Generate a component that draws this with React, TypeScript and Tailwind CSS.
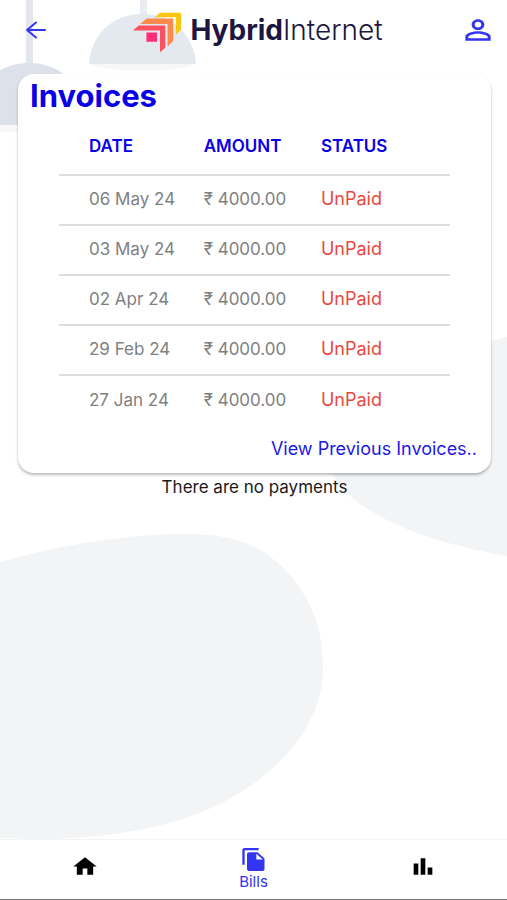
import type { ReactNode } from 'react';

type Invoice = {
  date: string;
  amount: string;
  status: string;
};

const invoices: Invoice[] = [
  { date: '06 May 24', amount: '₹ 4000.00', status: 'UnPaid' },
  { date: '03 May 24', amount: '₹ 4000.00', status: 'UnPaid' },
  { date: '02 Apr 24', amount: '₹ 4000.00', status: 'UnPaid' },
  { date: '29 Feb 24', amount: '₹ 4000.00', status: 'UnPaid' },
  { date: '27 Jan 24', amount: '₹ 4000.00', status: 'UnPaid' },
];

// Lamps at the top, soft blobs below
function Backdrop() {
  return (
    <svg
      className="absolute inset-0 -z-10 w-full h-full"
      viewBox="0 0 507 900"
      preserveAspectRatio="none"
      aria-hidden="true"
    >
      <path d="M-27 124a56 9 0 00112 0z" fill="#f8f8f7" />
      <path d="M26 0h7v64h-7z" fill="#e3e7ed" />
      <path d="M-27 125C-27 86-4 63 29 63s56 23 56 62z" fill="#dde2ea" />
      <path d="M89 63a54 9 0 00107 0z" fill="#f7f7f8" />
      <path d="M140 0h7v16h-7z" fill="#e9ecf1" />
      <path d="M89 64C91 35 112 14 142 14s52 21 54 50z" fill="#e4e8ef" />
      <path d="M507 337C440 352 350 400 326 455C332 500 400 538 507 556z" fill="#f2f4f6" />
      <path
        d="M0 562C60 545 125 534 185 534C235 534 262 545 288 573C312 600 323 630 323 668C323 710 300 745 266 774C215 817 140 838 40 839L0 838z"
        fill="#f2f4f6"
      />
    </svg>
  );
}

function Logo() {
  return (
    <div className="flex items-start gap-2 text-[#1c1640]">
      <svg className="w-[50px] h-[41px]" viewBox="400 34 150 124" aria-hidden="true">
        <path d="M468 50l16-14h64v52l-16 14V50z" fill="#fac710" />
        <path d="M424 70l20-16h80v68l-17 16V70z" fill="#fc8a4a" />
        <path d="M402 90l18-15h80v67l-16 14V90z" fill="#fb4f62" />
        <path d="M443 96h32v28h-32z" fill="#ff2d78" />
      </svg>
      <span className="text-[28px] leading-9 whitespace-nowrap">
        <span className="font-bold">Hybrid</span>
        <span className="font-light">Internet</span>
      </span>
    </div>
  );
}

function NavItem({ label, active = false, children }: { label: string; active?: boolean; children: ReactNode }) {
  return (
    <button
      type="button"
      aria-label={label}
      className={`flex-1 flex flex-col items-center justify-center ${active ? 'text-[#3434f5]' : 'pb-[6px] text-black'}`}
    >
      <svg className="w-7 h-[25px]" viewBox="0 0 24 24" preserveAspectRatio="none" fill="currentColor">
        {children}
      </svg>
      {active && <span className="text-[15px] leading-5">{label}</span>}
    </button>
  );
}

export default function App() {
  return (
    <div className="relative isolate min-h-screen flex flex-col bg-white font-[Inter,'Noto_Sans',sans-serif]">
      <Backdrop />

      <header className="flex items-start justify-between pt-3 pl-4 pr-[10px] h-[74px]">
        <button type="button" aria-label="Back" className="w-10 h-9 flex items-center justify-center text-[#3434f5]">
          <svg className="w-6 h-6" viewBox="0 0 24 24" fill="none" stroke="currentColor" strokeWidth={2} strokeLinecap="round" strokeLinejoin="round">
            <path d="M21 12H3M12 4.500L3 12l9 7.500" />
          </svg>
        </button>
        <Logo />
        <button type="button" aria-label="Profile" className="h-9 flex items-center text-[#3434f5]">
          <svg className="w-[38px] h-8" viewBox="0 0 24 24" preserveAspectRatio="none" fill="currentColor">
            <path d="M12 5.900c1.160 0 2.100.940 2.100 2.100s-.940 2.100-2.100 2.100S9.900 9.160 9.900 8s.940-2.100 2.100-2.100m0 9c2.970 0 6.100 1.460 6.100 2.100v1.100H5.900V17c0-.640 3.130-2.100 6.100-2.100M12 4C9.790 4 8 5.790 8 8s1.790 4 4 4 4-1.790 4-4-1.790-4-4-4zm0 9c-2.670 0-8 1.340-8 4v3h16v-3c0-2.660-5.330-4-8-4z" />
          </svg>
        </button>
      </header>

      <main className="flex-1 pl-[18px] pr-4">
        <section className="rounded-2xl bg-white shadow-[0_2px_3px_rgba(0,0,0,0.28)] pb-3">
          <h1 className="pl-3 pt-1 text-[31px] leading-9 font-bold text-[#0a00e6]">Invoices</h1>
          <div className="px-[41px]">
            <table className="w-full table-fixed text-left text-[17px]">
              <thead>
                <tr className="h-[61px] text-[#0a00e6]">
                  <th className="w-[37%] pl-[30px] pt-[6px] font-semibold">DATE</th>
                  <th className="w-[30%] pt-[6px] font-semibold">AMOUNT</th>
                  <th className="w-[33%] pt-[6px] font-semibold">STATUS</th>
                </tr>
              </thead>
              <tbody>
                {invoices.map((invoice) => (
                  <tr key={invoice.date} className="h-[50px] border-t-2 border-[#dededf] text-[#808080]">
                    <td className="pl-[30px]">{invoice.date}</td>
                    <td>{invoice.amount}</td>
                    <td className="pb-[3px] text-[18px] text-[#e8493f]">{invoice.status}</td>
                  </tr>
                ))}
              </tbody>
            </table>
          </div>
          <div className="flex justify-end pt-3 pr-[14px]">
            <a href="#previous" className="text-[18px] leading-6 text-[#1d18ea]">
              View Previous Invoices..
            </a>
          </div>
        </section>
        <p className="pt-[2px] text-center text-[17px] leading-6 text-[#1a1a1a]">There are no payments</p>
      </main>

      <nav className="flex h-[61px] bg-white border-t border-t-[#f3f3f3] border-b border-b-[#777777]">
        <NavItem label="Home">
          <path d="M10 20v-6h4v6h5v-8h3L12 3 2 12h3v8z" />
        </NavItem>
        <NavItem label="Bills" active>
          <path d="M16 1H4c-1.100 0-2 .900-2 2v14h2V3h12V1zm-1 4l6 6v10c0 1.100-.900 2-2 2H7.990C6.890 23 6 22.100 6 21l.010-14c0-1.100.890-2 1.990-2h7zm-1 7h5.500L14 6.500V12z" />
        </NavItem>
        <NavItem label="Usage">
          <path d="M4 9h4v11H4zM16 13h4v7h-4zM10 4h4v16h-4z" />
        </NavItem>
      </nav>
    </div>
  );
}
